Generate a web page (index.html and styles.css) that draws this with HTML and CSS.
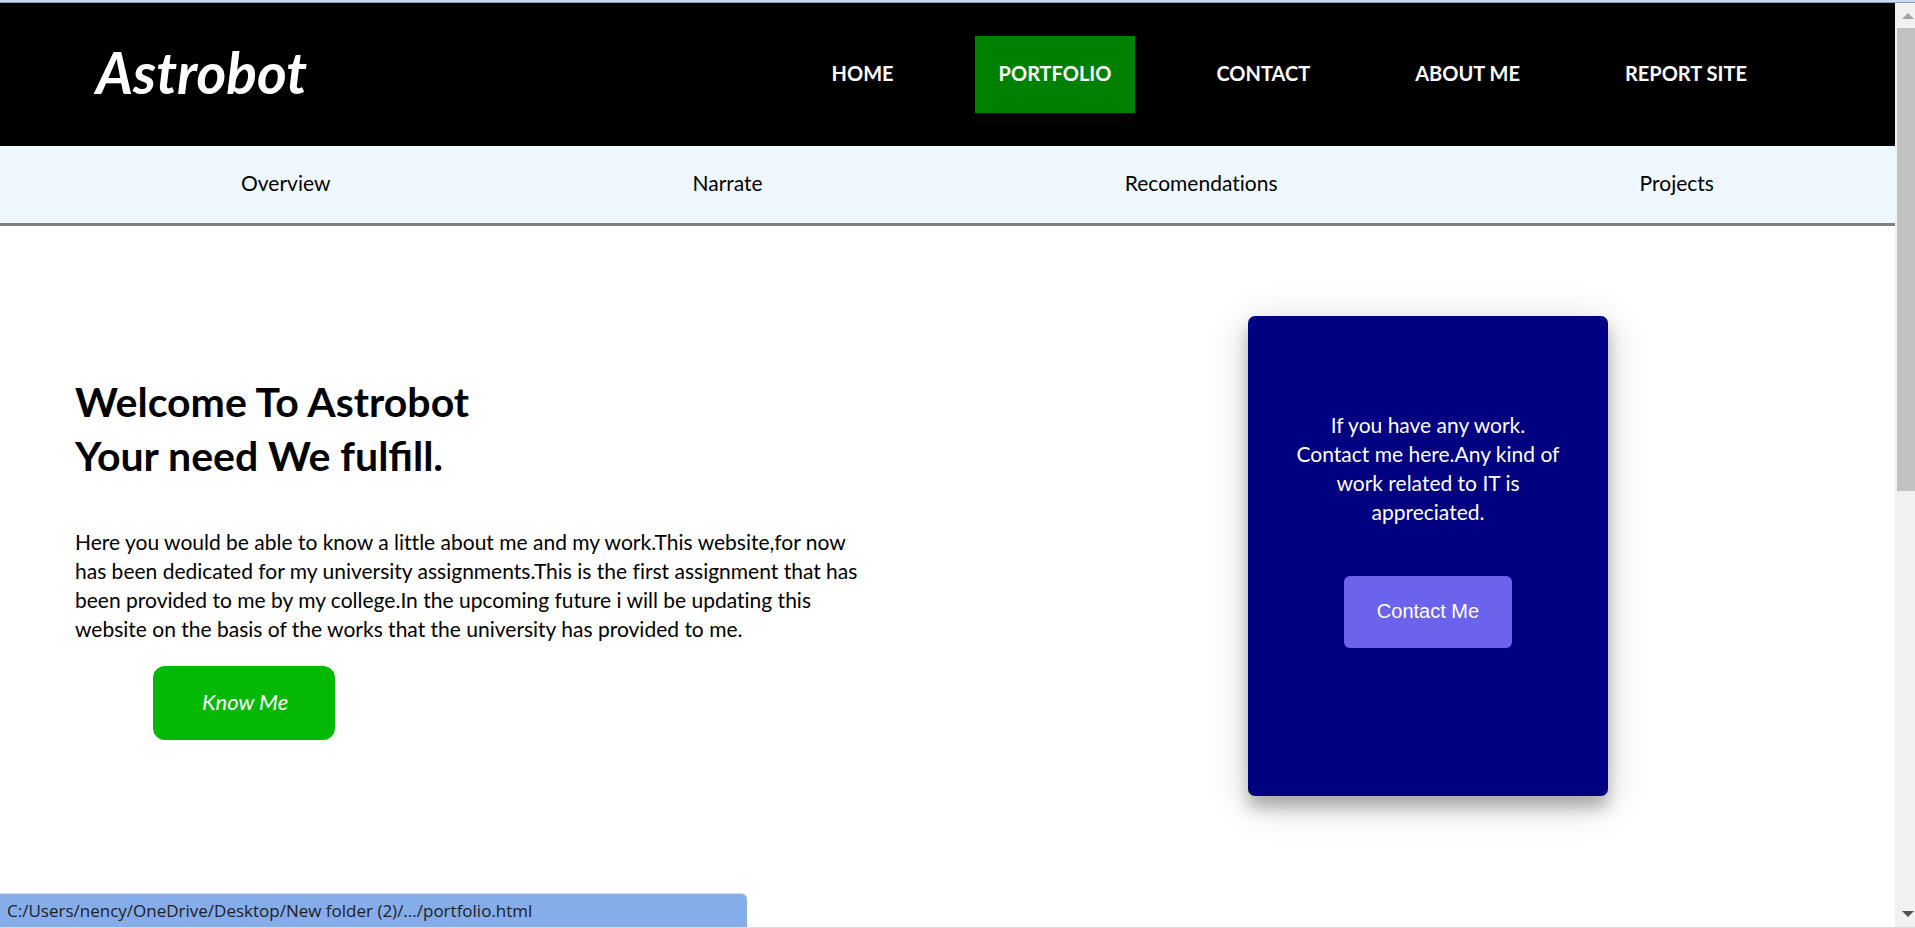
FILE: index.html
```html
<!DOCTYPE html>
<html lang="en">
<head>
<meta charset="utf-8">
<meta name="viewport" content="width=device-width, initial-scale=1">
<title>Astrobot</title>
<link rel="stylesheet" href="styles.css">
</head>
<body>
<div class="window-edge"></div>
<div class="view">
  <div class="page">
    <header class="header">
      <div class="logo">Astrobot</div>
      <nav class="nav" aria-label="Main">
        <a href="#home">HOME</a>
        <a href="#portfolio" class="active">PORTFOLIO</a>
        <a href="#contact">CONTACT</a>
        <a href="#about">ABOUT ME</a>
        <a href="#report">REPORT SITE</a>
      </nav>
    </header>
    <nav class="subnav" aria-label="Portfolio">
      <a href="#overview">Overview</a>
      <a href="#narrate">Narrate</a>
      <a href="#recomendations">Recomendations</a>
      <a href="#projects">Projects</a>
    </nav>
    <main class="hero">
      <section class="intro">
        <h1>Welcome To Astrobot<br>Your need We fulfill.</h1>
        <p>Here you would be able to know a little about me and my work.This website,for now<br>has been dedicated for my university assignments.This is the first assignment that has<br>been provided to me by my college.In the upcoming future i will be updating this<br>website on the basis of the works that the university has provided to me.</p>
        <button type="button" class="know">Know Me</button>
      </section>
      <aside class="card">
        <p>If you have any work.<br>Contact me here.Any kind of<br>work related to IT is<br>appreciated.</p>
        <button type="button" class="contact">Contact Me</button>
      </aside>
    </main>
  </div>
  <div class="scrollbar" aria-hidden="true">
    <svg class="arrow" width="12" height="6" viewBox="0 0 12 6"><path d="M0 6L6 0L12 6Z" fill="#a3a3a3"/></svg>
    <div class="track"><div class="thumb"></div></div>
    <svg class="arrow" width="12" height="6" viewBox="0 0 12 6"><path d="M0 0L6 6L12 0Z" fill="#505050"/></svg>
  </div>
</div>
<div class="status">C:/Users/nency/OneDrive/Desktop/New folder (2)/.../portfolio.html</div>
</body>
</html>
```
FILE: styles.css
```css
* {
  box-sizing: border-box;
}

body {
  margin: 0;
  height: 100vh;
  display: flex;
  flex-direction: column;
  overflow: hidden;
  background: #fff;
  color: #000;
  font-family: Lato, "Liberation Sans", sans-serif;
  font-size: 21px;
  line-height: 29px;
  font-variant-ligatures: no-common-ligatures;
}

a {
  color: inherit;
  text-decoration: none;
}

button {
  border: 0;
  color: #fff;
  cursor: pointer;
}

.window-edge {
  flex: none;
  height: 3px;
  background: #c9dcf7;
  border-bottom: 1px solid #8c9ab8;
}

.view {
  flex: 1;
  min-height: 0;
  display: flex;
  border-bottom: 1px solid #dcdcdc;
}

.page {
  flex: 1;
  overflow: hidden;
}

.header {
  display: flex;
  align-items: flex-start;
  justify-content: space-between;
  padding: 33px 124px 33px 96px;
  background: #000;
  color: #fff;
}

.logo {
  font-size: 57px;
  line-height: 73px;
  font-weight: 700;
  font-style: italic;
}

.nav {
  display: flex;
  gap: 57px;
  font-size: 20px;
  font-weight: 700;
}

.nav a {
  padding: 23px 24px 25px;
}

.nav .active {
  background: #008000;
}

.subnav {
  display: flex;
  justify-content: space-around;
  padding: 22px 0 26px 60px;
  background: #f0f8ff;
  border-bottom: 3px solid #808080;
}

.hero {
  display: flex;
  align-items: flex-start;
  justify-content: space-between;
  padding: 90px 287px 0 75px;
}

.intro {
  padding-top: 59px;
}

h1 {
  margin: 0;
  font-size: 41px;
  line-height: 54px;
  font-weight: 700;
  font-variant-ligatures: common-ligatures;
}

.intro p {
  margin: 44px 0 23px;
}

.know {
  display: block;
  margin-left: 78px;
  padding: 21px 47px 24px 49px;
  border-radius: 12px;
  background: #03b903;
  font: italic 400 22px/29px Lato, "Liberation Sans", sans-serif;
}

.card {
  display: flex;
  flex-direction: column;
  align-items: center;
  width: 360px;
  padding: 94px 40px 148px;
  border-radius: 7px;
  background: #000080;
  color: #fff;
  text-align: center;
  box-shadow: 0 12px 15px rgba(0, 0, 0, 0.24), 0 8px 40px rgba(0, 0, 0, 0.19);
}

.card p {
  margin: 0 0 50px;
  white-space: nowrap;
}

.contact {
  padding: 21px 33px 22px;
  border-radius: 6px;
  background: #6b63ec;
  font: 20px/29px "Liberation Sans", sans-serif;
}

.scrollbar {
  display: flex;
  flex-direction: column;
  width: 20px;
  padding: 10px 0;
  background: #f1f1f1;
}

.arrow {
  flex: none;
  display: block;
  margin-left: 7px;
}

.track {
  flex: 1;
  padding: 9px 0 9px 2px;
}

.thumb {
  height: 53%;
  background: #c1c1c1;
}

.status {
  position: absolute;
  left: 0;
  bottom: 1px;
  width: 39%;
  padding: 3px 7px;
  border-top: 1px solid #d5dae2;
  border-top-right-radius: 6px;
  background: #85adea;
  color: #202124;
  font: 17px/27px "Open Sans", "Noto Sans", sans-serif;
}
```
